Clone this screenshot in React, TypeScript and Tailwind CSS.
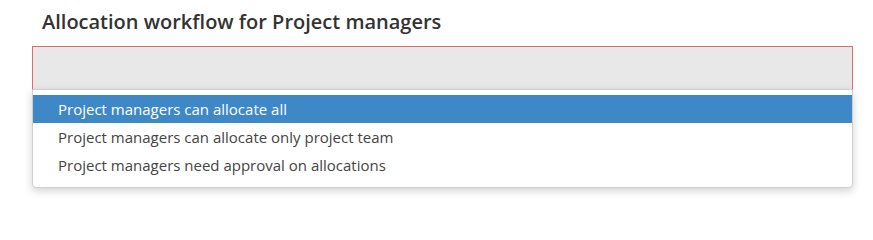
const options = [
  "Project managers can allocate all",
  "Project managers can allocate only project team",
  "Project managers need approval on allocations",
];

export default function App() {
  return (
    <div className="w-[873px] h-[202px] bg-white font-['Open_Sans',sans-serif]">
      <div className="pt-[8px] pl-[42px]">
        <h2 className="text-[20px] leading-[28px] font-semibold text-[#333]">
          Allocation workflow for Project managers
        </h2>
      </div>
      <div className="ml-[32px] w-[821px] mt-[10px] relative">
        <div className="h-[44px] bg-[#e8e8e8] border border-[#e06c6c]" />
        <div className="absolute left-0 right-0 top-[43px] bg-white border border-[#cfcfcf] rounded-b-[4px] shadow-[0_3px_8px_rgba(0,0,0,0.18)] pt-[5px] pb-[8px]">
          {options.map((opt, i) => (
            <div
              key={opt}
              className={
                i === 0
                  ? "h-[28px] leading-[28px] pl-[25px] text-[15px] bg-[#3f88c8] text-white"
                  : "h-[28px] leading-[28px] pl-[25px] text-[15px] text-[#444]"
              }
            >
              {opt}
            </div>
          ))}
        </div>
      </div>
    </div>
  );
}
